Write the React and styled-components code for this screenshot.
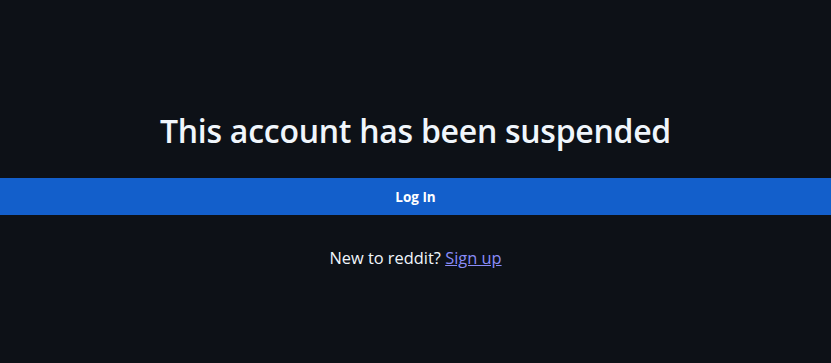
import React from 'react';
import styled, { createGlobalStyle } from 'styled-components';

const GlobalStyle = createGlobalStyle`
    html, body {
        margin: 0;
        padding: 0;
        background: #0d1117;
    }
    body {
        font-family: "Open Sans", "Noto Sans", sans-serif;
        color: #f0f6fc;
    }
`

const Page = styled.div`
    display: flex;
    flex-direction: column;
    align-items: stretch;
    padding-top: 108px;
    min-height: 363px;
    box-sizing: border-box;
`

const Title = styled.h1`
    margin: 0 0 24px;
    text-align: center;
    font-size: 32px;
    font-weight: 600;
    line-height: 46px;
    color: #f0f6fc;
    letter-spacing: -0.27px;
`

const LoginBar = styled.button`
    display: block;
    width: 100%;
    height: 37px;
    border: none;
    background: #135fcb;
    color: #ffffff;
    font-family: inherit;
    font-size: 13.5px;
    font-weight: 700;
    cursor: pointer;
`

const SignupLine = styled.p`
    margin: 30px 0 0;
    text-align: center;
    font-size: 16.4px;
    line-height: 26px;
    color: #f0f6fc;
`

const SignupLink = styled.a`
    color: #8a8cf8;
    text-decoration: underline;
`

export default function App() {
    return (
        <Page>
            <GlobalStyle />
            <Title>This account has been suspended</Title>
            <LoginBar>Log In</LoginBar>
            <SignupLine>
                New to reddit? <SignupLink href="#">Sign up</SignupLink>
            </SignupLine>
        </Page>
    );
}
